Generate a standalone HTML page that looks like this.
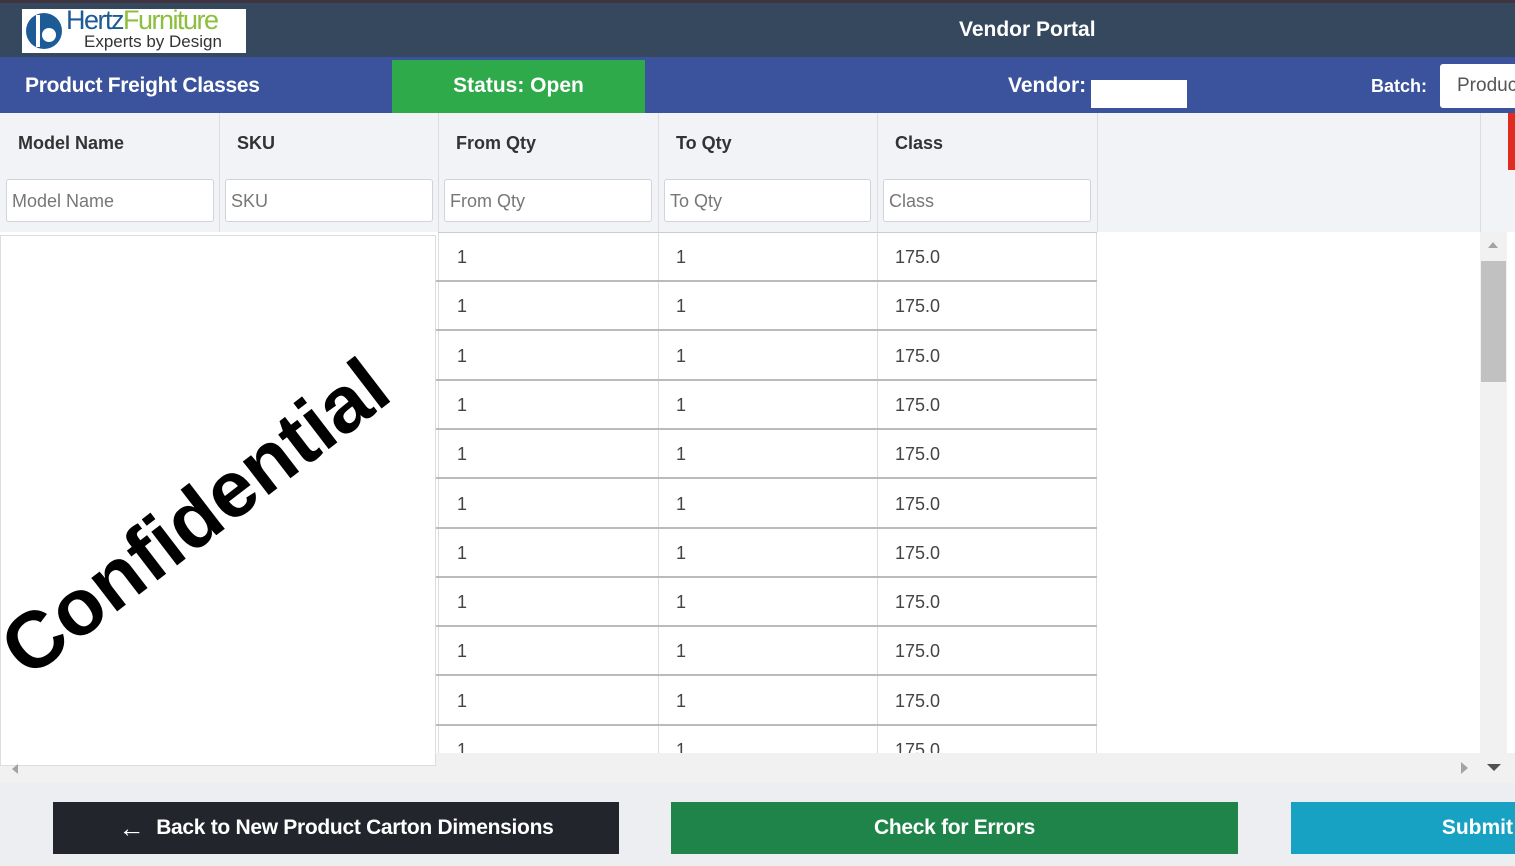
<!DOCTYPE html>
<html><head><style>
*{box-sizing:border-box;margin:0;padding:0}
body{width:1515px;height:866px;overflow:hidden;font-family:"Liberation Sans",sans-serif;background:#fff;position:relative}
.a{position:absolute}
.hd{font-weight:bold;color:#333;font-size:18px}
.in{position:absolute;top:179px;height:43px;background:#fff;border:1px solid #cfd3da;border-radius:3px;font-size:18px;color:#777;padding:11px 5px}
.cell{position:absolute;font-size:18px;color:#444}
.btn{position:absolute;top:802px;height:52px;color:#fff;font-weight:bold;font-size:21px;display:flex;align-items:center;justify-content:center}
</style></head><body>
<div class="a" style="left:0;top:0;width:1515px;height:3px;background:#3e3540"></div>
<div class="a" style="left:0;top:3px;width:1515px;height:54px;background:#36485e"></div>
<div class="a" style="left:22px;top:9px;width:224px;height:44px;background:#fff">
 <svg class="a" style="left:2px;top:2px" width="40" height="40" viewBox="0 0 40 40"><circle cx="20" cy="20" r="18" fill="#1d5b96"/><path d="M14 4 V36" stroke="#fff" stroke-width="4"/><circle cx="25" cy="24" r="7" fill="#fff"/></svg>
 <div class="a" style="left:44px;top:-4px;font-size:27px;color:#1d5b96;letter-spacing:-1.5px">Hertz<span style="color:#8cbf3f">Furniture</span></div>
 <div class="a" style="left:62px;top:23px;font-size:17px;color:#333">Experts by Design</div>
</div>
<div class="a" style="left:959px;top:18px;color:#fff;font-weight:bold;font-size:21px">Vendor Portal</div>
<div class="a" style="left:0;top:57px;width:1515px;height:56px;background:#3b539c"></div>
<div class="a" style="left:25px;top:74px;color:#fff;font-weight:bold;font-size:21px;letter-spacing:-0.3px">Product Freight Classes</div>
<div class="a" style="left:392px;top:60px;width:253px;height:53px;background:#2eaa4a;color:#fff;font-weight:bold;font-size:21px;text-align:center;line-height:51px">Status: Open</div>
<div class="a" style="left:1008px;top:74px;color:#fff;font-weight:bold;font-size:21px">Vendor:</div>
<div class="a" style="left:1091px;top:80px;width:96px;height:28px;background:#fff"></div>
<div class="a" style="left:1371px;top:76px;color:#fff;font-weight:bold;font-size:18px">Batch:</div>
<div class="a" style="left:1440px;top:64px;width:80px;height:44px;background:#fff;border-radius:3px;font-size:19px;color:#555;padding:11px 17px;overflow:hidden;white-space:nowrap">Produc</div>
<div class="a" style="left:0;top:113px;width:1480px;height:119px;background:#f2f3f7"></div>
<div class="a" style="left:1480px;top:113px;width:35px;height:119px;background:#f2f3f7;border-left:1px solid #ddd"></div>
<div class="a" style="left:1508px;top:113px;width:7px;height:57px;background:#e02b20"></div>
<div class="a" style="left:219px;top:113px;width:1px;height:119px;background:#ddd"></div>
<div class="a" style="left:438px;top:113px;width:1px;height:119px;background:#ddd"></div>
<div class="a" style="left:658px;top:113px;width:1px;height:119px;background:#ddd"></div>
<div class="a" style="left:877px;top:113px;width:1px;height:119px;background:#ddd"></div>
<div class="a" style="left:1097px;top:113px;width:1px;height:119px;background:#ddd"></div>
<div class="a hd" style="left:18px;top:133px">Model Name</div>
<div class="a hd" style="left:237px;top:133px">SKU</div>
<div class="a hd" style="left:456px;top:133px">From Qty</div>
<div class="a hd" style="left:676px;top:133px">To Qty</div>
<div class="a hd" style="left:895px;top:133px">Class</div>
<div class="in" style="left:6px;width:208px">Model Name</div>
<div class="in" style="left:225px;width:208px">SKU</div>
<div class="in" style="left:444px;width:208px">From Qty</div>
<div class="in" style="left:664px;width:207px">To Qty</div>
<div class="in" style="left:883px;width:208px">Class</div>
<div class="a" style="left:438px;top:232px;width:659px;height:521px;border-left:1px solid #ddd;border-right:1px solid #ddd"></div>
<div class="a" style="left:658px;top:232px;width:1px;height:521px;background:#ddd"></div>
<div class="a" style="left:877px;top:232px;width:1px;height:521px;background:#ddd"></div>
<div class="a" style="left:438px;top:232px;width:659px;height:1px;background:#ccc"></div>
<div id="rows"></div>
<script>
var h='';for(var i=0;i<11;i++){var t=232+i*49.3;
h+='<div class="cell" style="left:457px;top:'+(t+15)+'px">1</div><div class="cell" style="left:676px;top:'+(t+15)+'px">1</div><div class="cell" style="left:895px;top:'+(t+15)+'px">175.0</div>';
if(i<10)h+='<div class="a" style="left:436px;top:'+(t+48)+'px;width:661px;height:2px;background:#bbb"></div>';}
document.getElementById('rows').innerHTML=h;
</script>
<div class="a" style="left:0;top:235px;width:436px;height:531px;background:#fff;border:1px solid #ddd;overflow:hidden">
 <div class="a" style="left:35px;top:374px;font-size:80px;line-height:1;font-weight:bold;color:#000;white-space:nowrap;transform-origin:0 100%;transform:rotate(-37.5deg)">Confidential</div>
</div>
<div class="a" style="left:1480px;top:232px;width:27px;height:521px;background:#f1f1f1"></div>
<div class="a" style="left:1481px;top:261px;width:25px;height:121px;background:#c1c1c1"></div>
<div class="a" style="left:1488px;top:242px;width:0;height:0;border-left:5px solid transparent;border-right:5px solid transparent;border-bottom:6px solid #a3a3a3"></div>
<div class="a" style="left:436px;top:753px;width:1044px;height:30px;background:#f1f1f1"></div>
<div class="a" style="left:0;top:766px;width:436px;height:17px;background:#f1f1f1"></div>
<div class="a" style="left:12px;top:764px;width:0;height:0;border-top:5px solid transparent;border-bottom:5px solid transparent;border-right:6px solid #a3a3a3"></div>
<div class="a" style="left:1461px;top:762px;width:0;height:0;border-top:6px solid transparent;border-bottom:6px solid transparent;border-left:7px solid #a3a3a3"></div>
<div class="a" style="left:1480px;top:753px;width:35px;height:30px;background:#f1f1f1"></div>
<div class="a" style="left:1487px;top:764px;width:0;height:0;border-left:7px solid transparent;border-right:7px solid transparent;border-top:7px solid #505050"></div>
<div class="a" style="left:0;top:783px;width:1515px;height:83px;background:#eceef2"></div>
<div class="btn" style="left:53px;width:566px;background:#22252c;letter-spacing:-0.3px"><span style="font-size:26px;margin-right:12px">&#8592;</span>Back to New Product Carton Dimensions</div>
<div class="btn" style="left:671px;width:567px;background:#1e8449;letter-spacing:-0.3px">Check for Errors</div>
<div class="btn" style="left:1291px;width:224px;background:#17a2c4;justify-content:flex-end;padding-right:2px">Submit</div>
</body></html>
